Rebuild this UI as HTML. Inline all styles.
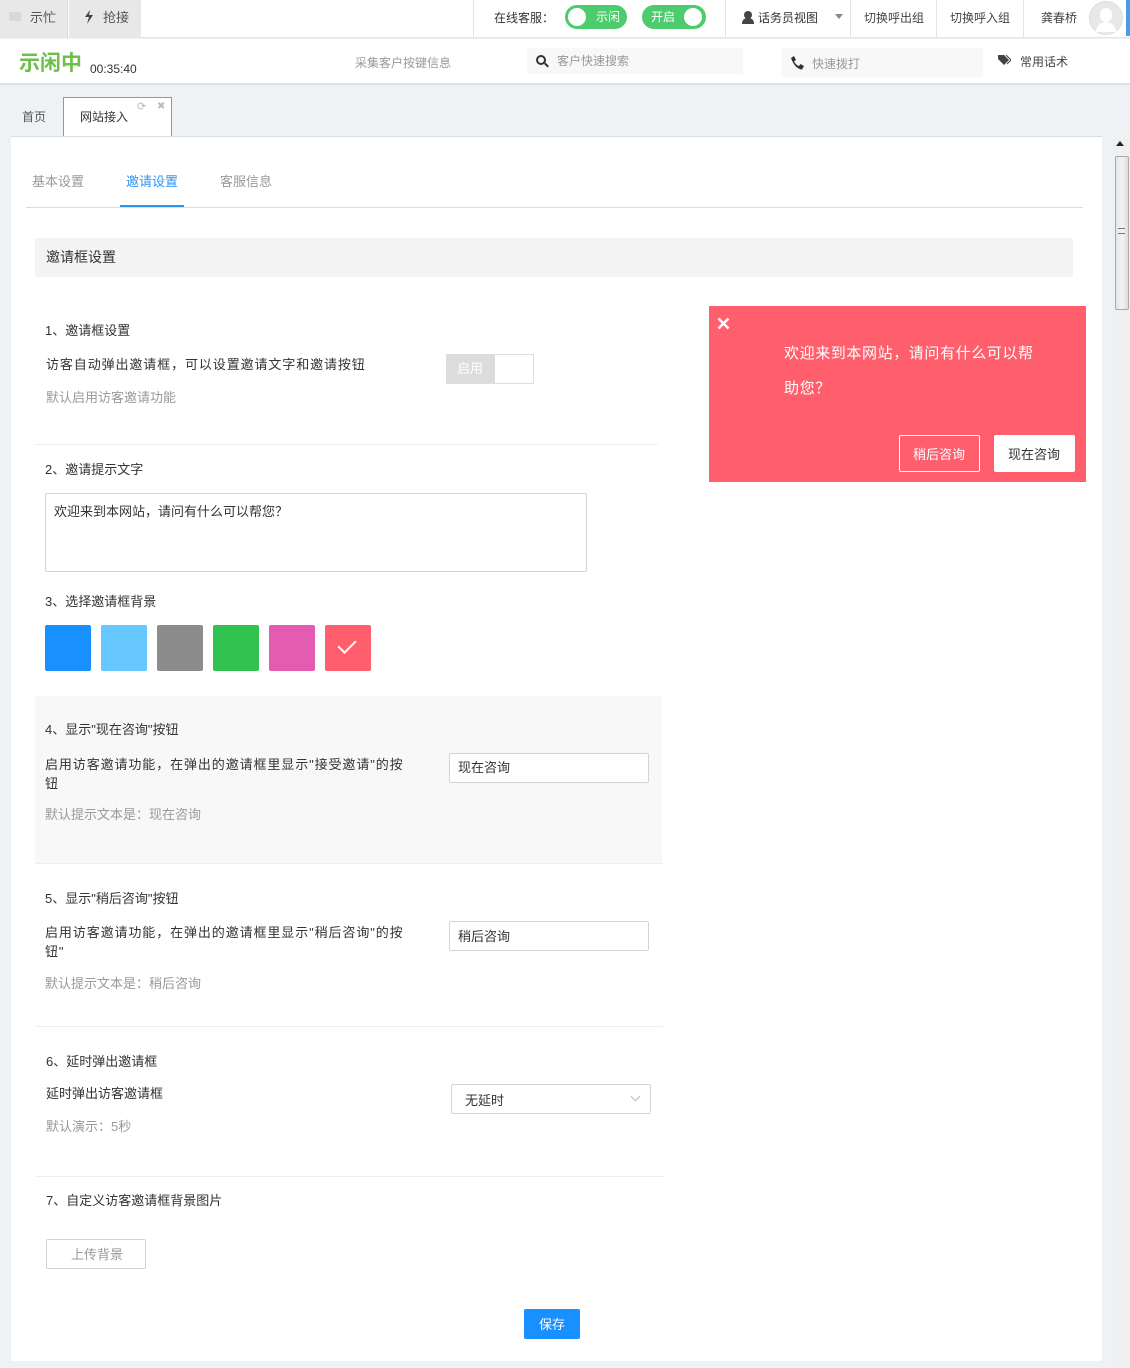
<!DOCTYPE html>
<html><head><meta charset="utf-8"><style>
*{margin:0;padding:0;box-sizing:border-box}
body{width:1130px;height:1368px;background:#eef2f5;font-family:"Liberation Sans","Noto Sans CJK SC",sans-serif;font-size:13px;color:#333;position:relative;overflow:hidden}
.a{position:absolute;white-space:nowrap;line-height:16px}
.g{color:#999}
.sw{width:46px;height:46px;border-radius:2px}
.inp{border:1px solid #d4d4d4;border-radius:2px;background:#fff}
.w{letter-spacing:0.9px}
</style></head><body>
<!-- top bar -->
<div class="a" style="left:0;top:0;width:1130px;height:38px;background:#fff;border-bottom:1px solid #e4e4e4"></div>
<div class="a" style="left:0;top:0;width:68px;height:38px;background:#e8e8e8;border-right:1px solid #d8d8d8"></div>
<div class="a" style="left:69px;top:0;width:72px;height:38px;background:#e8e8e8"></div>
<div class="a" style="left:9px;top:12px;width:12px;height:9px;background:#d8d8d8;border-radius:1px"></div>
<div class="a" style="left:30px;top:10px;color:#555">示忙</div>
<svg class="a" style="left:83px;top:10px" width="12" height="14" viewBox="0 0 12 14"><path d="M7 0 L2 7 L6 7 L4 14 L10 5 L6 5 Z" fill="#444"/></svg>
<div class="a" style="left:103px;top:10px;color:#555">抢接</div>
<div class="a" style="left:473px;top:0;width:1px;height:38px;background:#e4e4e4"></div>
<div class="a" style="left:494px;top:10px;font-size:12px">在线客服：</div>
<div class="a" style="left:565px;top:5px;width:62px;height:24px;border-radius:12px;background:#4ccc6c"></div>
<div class="a" style="left:568px;top:8px;width:18px;height:18px;border-radius:9px;background:#fff"></div>
<div class="a" style="left:596px;top:9px;font-size:12px;color:#fff">示闲</div>
<div class="a" style="left:642px;top:5px;width:64px;height:24px;border-radius:12px;background:#4ccc6c"></div>
<div class="a" style="left:684px;top:8px;width:18px;height:18px;border-radius:9px;background:#fff"></div>
<div class="a" style="left:651px;top:9px;font-size:12px;color:#fff">开启</div>
<div class="a" style="left:725px;top:0;width:1px;height:38px;background:#e4e4e4"></div>
<svg class="a" style="left:741px;top:10px" width="14" height="14" viewBox="0 0 14 14"><circle cx="7" cy="5" r="4" fill="#444"/><path d="M1 14 Q1 8 7 8 Q13 8 13 14Z" fill="#444"/></svg>
<div class="a" style="left:758px;top:10px;font-size:12px">话务员视图</div>
<div class="a" style="left:835px;top:14px;border:4px solid transparent;border-top:5px solid #888"></div>
<div class="a" style="left:850px;top:0;width:1px;height:38px;background:#e4e4e4"></div>
<div class="a" style="left:864px;top:10px;font-size:12px;color:#444">切换呼出组</div>
<div class="a" style="left:936px;top:0;width:1px;height:38px;background:#e4e4e4"></div>
<div class="a" style="left:950px;top:10px;font-size:12px;color:#444">切换呼入组</div>
<div class="a" style="left:1023px;top:0;width:1px;height:38px;background:#e4e4e4"></div>
<div class="a" style="left:1041px;top:10px;font-size:12px;color:#444">龚春桥</div>
<div class="a" style="left:1089px;top:1px;width:34px;height:34px;border-radius:17px;background:#e8e8e8;border:1px solid #ddd"></div>
<div class="a" style="left:1100px;top:8px;width:12px;height:14px;border-radius:6px;background:#fff"></div>
<div class="a" style="left:1096px;top:22px;width:20px;height:10px;border-radius:10px 10px 0 0;background:#fff"></div>
<div class="a" style="left:1126px;top:0;width:4px;height:36px;background:#4a9de0"></div>
<!-- second bar -->
<div class="a" style="left:0;top:39px;width:1130px;height:46px;background:#fff;border-bottom:2px solid #dde2e6"></div>
<div class="a" style="left:19px;top:52px;font-size:21px;line-height:24px;font-weight:bold;color:#6cc04a">示闲中</div>
<div class="a" style="left:90px;top:61px;font-size:12px">00:35:40</div>
<div class="a g" style="left:355px;top:55px;font-size:12px">采集客户按键信息</div>
<div class="a" style="left:527px;top:48px;width:216px;height:26px;background:#f8f8f8"></div>
<div class="a" style="left:536px;top:55px;width:10px;height:10px;border:2px solid #333;border-radius:50%"></div>
<div class="a" style="left:544px;top:64px;width:5px;height:2px;background:#333;transform:rotate(45deg)"></div>
<div class="a g" style="left:557px;top:53px;font-size:12px">客户快速搜索</div>
<div class="a" style="left:782px;top:48px;width:201px;height:29px;background:#f8f8f8"></div>
<svg class="a" style="left:790px;top:56px" width="14" height="14" viewBox="0 0 14 14"><path d="M1 2 L4 0 L6 4 L4 5.5 Q6 9 9 10 L10.5 8 L14 10 L12 13.5 Q5 13 1 2Z" fill="#333"/></svg>
<div class="a g" style="left:812px;top:56px;font-size:12px">快速拨打</div>
<svg class="a" style="left:998px;top:55px" width="13" height="10" viewBox="0 0 13 10"><path d="M0 0 H6 L11 5 L6 10 L0 4Z" fill="#444"/><path d="M8 0 L13 5 L9 9" stroke="#444" fill="none"/></svg>
<div class="a" style="left:1020px;top:54px;font-size:12px;color:#444">常用话术</div>
<!-- tabs -->
<div class="a" style="left:22px;top:109px;font-size:12px;color:#555">首页</div>
<div class="a" style="left:63px;top:97px;width:109px;height:40px;background:#fff;border:1px solid #5aa8e0;border-bottom:none"></div>
<div class="a" style="left:80px;top:109px;font-size:12px">网站接入</div>
<div class="a" style="left:137px;top:99px;font-size:11px;color:#bbb">⟳</div>
<div class="a" style="left:157px;top:99px;font-size:10px;color:#bbb">✖</div>
<!-- panel -->
<div class="a" style="left:11px;top:136px;width:1091px;height:1225px;background:#fff;border-top:1px solid #ddd"></div>
<div class="a" style="left:1103px;top:136px;width:10px;height:1232px;background:#eef2f5"></div>
<div class="a" style="left:1113px;top:138px;width:17px;height:1230px;background:#f0f0f0"></div>
<div class="a" style="left:1116px;top:141px;border:4px solid transparent;border-bottom:5px solid #222;border-top:none"></div>
<div class="a" style="left:1115px;top:156px;width:14px;height:154px;background:linear-gradient(90deg,#e4e4e4,#f4f4f4,#dcdcdc);border:1px solid #aaa;border-radius:2px"></div>
<div class="a" style="left:1118px;top:228px;width:7px;height:6px;border-top:1px solid #777;border-bottom:1px solid #777"></div>
<!-- sub tabs -->
<div class="a g" style="left:32px;top:174px">基本设置</div>
<div class="a" style="left:126px;top:174px;color:#2e95ef">邀请设置</div>
<div class="a g" style="left:220px;top:174px">客服信息</div>
<div class="a" style="left:26px;top:207px;width:1057px;height:1px;background:#ddd"></div>
<div class="a" style="left:120px;top:205px;width:64px;height:2px;background:#2e95ef"></div>
<div class="a" style="left:35px;top:238px;width:1038px;height:39px;background:#f4f4f4"></div>
<div class="a" style="left:46px;top:249px;font-size:14px">邀请框设置</div>
<!-- section 1 -->
<div class="a" style="left:45px;top:323px">1、邀请框设置</div>
<div class="a w" style="left:46px;top:357px">访客自动弹出邀请框，可以设置邀请文字和邀请按钮</div>
<div class="a g" style="left:46px;top:390px">默认启用访客邀请功能</div>
<div class="a" style="left:446px;top:354px;width:88px;height:30px;border:1px solid #ddd;background:#fff"></div>
<div class="a" style="left:447px;top:355px;width:48px;height:28px;background:#dcdcdc"></div>
<div class="a" style="left:457px;top:361px;color:#fff">启用</div>
<div class="a" style="left:35px;top:444px;width:623px;height:1px;background:#eee"></div>
<!-- section 2 -->
<div class="a" style="left:45px;top:462px">2、邀请提示文字</div>
<div class="a inp" style="left:45px;top:493px;width:542px;height:79px"></div>
<div class="a" style="left:54px;top:504px">欢迎来到本网站，请问有什么可以帮您？</div>
<div class="a" style="left:45px;top:594px">3、选择邀请框背景</div>
<div class="a sw" style="left:45px;top:625px;background:#1890ff"></div>
<div class="a sw" style="left:101px;top:625px;background:#66c8ff"></div>
<div class="a sw" style="left:157px;top:625px;background:#8c8c8c"></div>
<div class="a sw" style="left:213px;top:625px;background:#32c250"></div>
<div class="a sw" style="left:269px;top:625px;background:#e45bb2"></div>
<div class="a sw" style="left:325px;top:625px;background:#ff5f6d"></div>
<div class="a" style="left:342px;top:636px;width:10px;height:17px;border-right:2px solid #fff;border-bottom:2px solid #fff;transform:rotate(45deg)"></div>
<!-- section 4 -->
<div class="a" style="left:35px;top:696px;width:627px;height:168px;background:#f8f8f8;border-bottom:1px solid #eee"></div>
<div class="a" style="left:45px;top:722px">4、显示"现在咨询"按钮</div>
<div class="a w" style="left:45px;top:755px;line-height:19px">启用访客邀请功能，在弹出的邀请框里显示"接受邀请"的按<br>钮</div>
<div class="a g" style="left:45px;top:807px">默认提示文本是：现在咨询</div>
<div class="a inp" style="left:449px;top:753px;width:200px;height:30px"></div>
<div class="a" style="left:458px;top:760px">现在咨询</div>
<!-- section 5 -->
<div class="a" style="left:45px;top:891px">5、显示"稍后咨询"按钮</div>
<div class="a w" style="left:45px;top:923px;line-height:19px">启用访客邀请功能，在弹出的邀请框里显示"稍后咨询"的按<br>钮"</div>
<div class="a g" style="left:45px;top:976px">默认提示文本是：稍后咨询</div>
<div class="a inp" style="left:449px;top:921px;width:200px;height:30px"></div>
<div class="a" style="left:458px;top:929px">稍后咨询</div>
<div class="a" style="left:35px;top:1026px;width:628px;height:1px;background:#eee"></div>
<!-- section 6 -->
<div class="a" style="left:46px;top:1054px">6、延时弹出邀请框</div>
<div class="a" style="left:46px;top:1086px">延时弹出访客邀请框</div>
<div class="a g" style="left:46px;top:1119px">默认演示：5秒</div>
<div class="a inp" style="left:451px;top:1084px;width:200px;height:30px"></div>
<div class="a" style="left:465px;top:1093px">无延时</div>
<div class="a" style="left:632px;top:1093px;width:7px;height:7px;border-right:1px solid #bbb;border-bottom:1px solid #bbb;transform:rotate(45deg)"></div>
<div class="a" style="left:35px;top:1176px;width:629px;height:1px;background:#eee"></div>
<!-- section 7 -->
<div class="a" style="left:46px;top:1193px">7、自定义访客邀请框背景图片</div>
<div class="a inp" style="left:46px;top:1239px;width:100px;height:30px"></div>
<div class="a g" style="left:71px;top:1247px">上传背景</div>
<div class="a" style="left:524px;top:1309px;width:56px;height:30px;background:#1890ff;border-radius:2px"></div>
<div class="a" style="left:539px;top:1317px;color:#fff">保存</div>
<!-- preview -->
<div class="a" style="left:709px;top:306px;width:377px;height:176px;background:#ff5f6d"></div>
<svg class="a" style="left:717px;top:317px" width="13" height="13" viewBox="0 0 13 13"><path d="M1.5 1.5 L11.5 11.5 M11.5 1.5 L1.5 11.5" stroke="#fff" stroke-width="2.6"/></svg>
<div class="a w" style="left:784px;top:336px;font-size:15px;color:#fff;line-height:35px;letter-spacing:0.6px">欢迎来到本网站，请问有什么可以帮<br>助您？</div>
<div class="a" style="left:899px;top:435px;width:81px;height:37px;border:1px solid #fff;border-radius:2px"></div>
<div class="a" style="left:913px;top:447px;color:#fff">稍后咨询</div>
<div class="a" style="left:994px;top:435px;width:81px;height:37px;background:#fff;border-radius:2px"></div>
<div class="a" style="left:1008px;top:447px">现在咨询</div>
</body></html>
